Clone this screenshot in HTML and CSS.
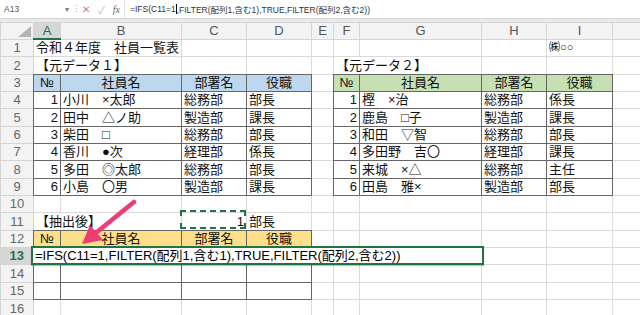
FILE: index.html
```html
<!DOCTYPE html>
<html lang="ja">
<head>
<meta charset="utf-8">
<title>社員一覧表</title>
<link rel="stylesheet" href="styles.css">
</head>
<body>
<div class="app">
  <div class="fbar">
    <div class="namebox"><span>A13</span><span class="dd">▾</span></div>
    <div class="grip">⋮</div>
    <div class="btns"><span class="cancel">✕</span><span class="ok">✓</span><span class="fx">fx</span></div>
    <div class="formula">=IFS(C11=1<span class="caret"></span>,FILTER(配列1,含む1),TRUE,FILTER(配列2,含む2))</div>
  </div>
  <div class="gap"></div>
  <table class="sheet">
    <colgroup>
      <col class="c-rh"><col class="c-a"><col class="c-b"><col class="c-c"><col class="c-d"><col class="c-e"><col class="c-f"><col class="c-g"><col class="c-h"><col class="c-i"><col class="c-j">
    </colgroup>
    <tr class="hdr">
      <th class="corner"><svg width="16" height="12" viewBox="0 0 16 12"><polygon points="15,0 15,11 2,11" fill="#b4b4b4"/></svg></th>
      <th class="ch sel">A</th><th class="ch">B</th><th class="ch">C</th><th class="ch">D</th><th class="ch">E</th><th class="ch">F</th><th class="ch">G</th><th class="ch">H</th><th class="ch">I</th><th class="ch"></th>
    </tr>
    <tr class="r17">
      <th class="rh">1</th><td colspan="2">令和４年度　社員一覧表</td><td></td><td></td><td></td><td></td><td></td><td></td><td class="co">㈱○○</td><td></td>
    </tr>
    <tr class="r18">
      <th class="rh">2</th><td colspan="2">【元データ１】</td><td></td><td></td><td></td><td colspan="2">【元データ２】</td><td></td><td></td><td></td>
    </tr>
    <tr class="r17">
      <th class="rh">3</th><td class="t hb c">№</td><td class="t hb c">社員名</td><td class="t hb c">部署名</td><td class="t hb c">役職</td><td></td><td class="t hg c">№</td><td class="t hg c">社員名</td><td class="t hg c">部署名</td><td class="t hg c">役職</td><td></td>
    </tr>
    <tr class="r17">
      <th class="rh">4</th><td class="t r">1</td><td class="t">小川　×太郎</td><td class="t">総務部</td><td class="t">部長</td><td></td><td class="t r">1</td><td class="t">樫　×治</td><td class="t">総務部</td><td class="t">係長</td><td></td>
    </tr>
    <tr class="r18">
      <th class="rh">5</th><td class="t r">2</td><td class="t">田中　△ノ助</td><td class="t">製造部</td><td class="t">課長</td><td></td><td class="t r">2</td><td class="t">鹿島　□子</td><td class="t">製造部</td><td class="t">課長</td><td></td>
    </tr>
    <tr class="r17">
      <th class="rh">6</th><td class="t r">3</td><td class="t">柴田　□</td><td class="t">総務部</td><td class="t">部長</td><td></td><td class="t r">3</td><td class="t">和田　▽智</td><td class="t">総務部</td><td class="t">部長</td><td></td>
    </tr>
    <tr class="r17">
      <th class="rh">7</th><td class="t r">4</td><td class="t">香川　●次</td><td class="t">経理部</td><td class="t">係長</td><td></td><td class="t r">4</td><td class="t">多田野　吉〇</td><td class="t">経理部</td><td class="t">課長</td><td></td>
    </tr>
    <tr class="r18">
      <th class="rh">8</th><td class="t r">5</td><td class="t">多田　◎太郎</td><td class="t">総務部</td><td class="t">部長</td><td></td><td class="t r">5</td><td class="t">来城　×△</td><td class="t">総務部</td><td class="t">主任</td><td></td>
    </tr>
    <tr class="r17">
      <th class="rh">9</th><td class="t r">6</td><td class="t">小島　〇男</td><td class="t">製造部</td><td class="t">課長</td><td></td><td class="t r">6</td><td class="t">田島　雅×</td><td class="t">製造部</td><td class="t">部長</td><td></td>
    </tr>
    <tr class="r17">
      <th class="rh">10</th><td></td><td></td><td></td><td></td><td></td><td></td><td></td><td></td><td></td><td></td>
    </tr>
    <tr class="r18">
      <th class="rh">11</th><td colspan="2">【抽出後】</td><td class="r">1</td><td>部長</td><td></td><td></td><td></td><td></td><td></td><td></td>
    </tr>
    <tr class="r17">
      <th class="rh">12</th><td class="t ho c">№</td><td class="t ho c">社員名</td><td class="t ho c">部署名</td><td class="t ho c">役職</td><td></td><td></td><td></td><td></td><td></td><td></td>
    </tr>
    <tr class="r17">
      <th class="rh sel">13</th><td class="t"></td><td class="t"></td><td class="t"></td><td class="t"></td><td></td><td></td><td></td><td></td><td></td><td></td>
    </tr>
    <tr class="r18">
      <th class="rh">14</th><td class="t"></td><td class="t"></td><td class="t"></td><td class="t"></td><td></td><td></td><td></td><td></td><td></td><td></td>
    </tr>
    <tr class="r17">
      <th class="rh">15</th><td class="t"></td><td class="t"></td><td class="t"></td><td class="t"></td><td></td><td></td><td></td><td></td><td></td><td></td>
    </tr>
    <tr class="r18">
      <th class="rh">16</th><td></td><td></td><td></td><td></td><td></td><td></td><td></td><td></td><td></td><td></td>
    </tr>
  </table>
  <div class="ants"></div>
  <div class="editor">=IFS(C11=1,FILTER(配列1,含む1),TRUE,FILTER(配列2,含む2))</div>
  <svg class="arrow" width="640" height="315" viewBox="0 0 640 315">
    <line x1="134" y1="202" x2="97" y2="232" stroke="#ee3d72" stroke-width="4.5" stroke-linecap="round"/>
    <polygon points="82,244 90,225 103,240" fill="#ee3d72"/>
  </svg>
</div>
</body>
</html>
```
FILE: styles.css
```css
html, body {
  margin: 0;
  padding: 0;
  background: #fff;
}
.app {
  position: relative;
  width: 640px;
  height: 315px;
  overflow: hidden;
  font-family: "Liberation Sans", "Noto Sans CJK JP", sans-serif;
}
.fbar {
  display: flex;
  align-items: center;
  height: 19px;
  border-bottom: 1px solid #d4d4d4;
  background: #fff;
  font-size: 8.5px;
  color: #444;
  box-sizing: border-box;
}
.namebox {
  width: 72px;
  height: 100%;
  display: flex;
  align-items: center;
  justify-content: space-between;
  padding: 0 3px 0 4px;
  box-sizing: border-box;
  color: #555;
}
.dd {
  font-size: 8px;
  color: #777;
}
.grip {
  width: 6px;
  color: #aaa;
  font-size: 9px;
  text-align: center;
}
.btns {
  display: flex;
  align-items: center;
  gap: 8px;
  padding: 0 0 0 4px;
  width: 42px;
  font-size: 10px;
}
.cancel {
  color: #d27a86;
}
.ok {
  color: #9cc4a0;
}
.fx {
  color: #666;
  font-style: italic;
  font-family: "Liberation Serif", serif;
  font-size: 10px;
}
.formula {
  flex: 1;
  height: 100%;
  display: flex;
  align-items: center;
  padding-left: 5px;
  border-left: 1px solid #e0e0e0;
  white-space: nowrap;
  color: #333;
}
.caret {
  display: inline-block;
  width: 1px;
  height: 10px;
  background: #000;
}
.gap {
  height: 3px;
  background: #e9e9e9;
}
table.sheet {
  border-collapse: collapse;
  table-layout: fixed;
  width: 640px;
}
.c-rh { width: 33px; }
.c-a { width: 27px; }
.c-b { width: 121px; }
.c-c { width: 65px; }
.c-d { width: 65px; }
.c-e { width: 22px; }
.c-f { width: 26px; }
.c-g { width: 122px; }
.c-h { width: 65px; }
.c-i { width: 66px; }
.c-j { width: 28px; }
tr.hdr { height: 16px; }
tr.r17 { height: 17px; }
tr.r18 { height: 18px; }
th, td {
  padding: 0 2px;
  white-space: nowrap;
  overflow: visible;
  font-size: 13px;
  line-height: 15px;
}
td {
  border: 1px solid #dadada;
  color: #111;
  text-align: left;
}
th.corner {
  background: #f3f3f3;
  border: 1px solid #d5d5d5;
  text-align: right;
  vertical-align: bottom;
  padding: 0 1px 1px 0;
  line-height: 0;
}
th.ch {
  background: #f3f3f3;
  border: 1px solid #d5d5d5;
  color: #555;
  font-weight: normal;
  text-align: center;
}
th.ch.sel {
  background: #d6d6d6;
  color: #217346;
  border-bottom: 2px solid #217346;
}
th.rh {
  background: #f3f3f3;
  border: 1px solid #d5d5d5;
  color: #666;
  font-weight: normal;
  text-align: center;
}
th.rh.sel {
  background: #d6d6d6;
  color: #217346;
  font-weight: bold;
  border-right: 2px solid #217346;
}
td.t {
  border: 1px double #666;
}
td.c { text-align: center; }
td.r { text-align: right; }
td.hb { background: #bdd7ee; }
td.hg { background: #c6e0b4; }
td.ho { background: #ffe08a; }
td.co { font-size: 11px; }
.ants {
  position: absolute;
  left: 180px;
  top: 210px;
  width: 62px;
  height: 15px;
  border: 2px dashed #217346;
}
.editor {
  position: absolute;
  left: 31px;
  top: 246px;
  width: 447px;
  height: 15px;
  border: 2px solid #217346;
  background: #fff;
  font-size: 13px;
  line-height: 15px;
  padding-left: 2px;
  white-space: nowrap;
  overflow: hidden;
  color: #000;
  box-shadow: 0 1px 1px rgba(0,0,0,0.25);
}
.arrow {
  position: absolute;
  left: 0;
  top: 0;
  pointer-events: none;
}
```
